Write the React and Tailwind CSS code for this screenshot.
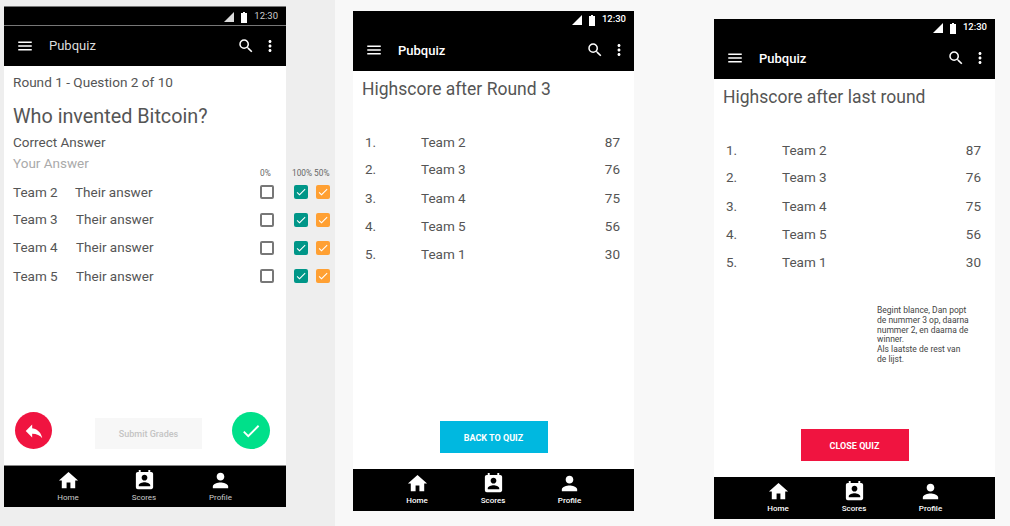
import React from 'react';
import { MdHome, MdPermContactCalendar, MdPerson, MdReply, MdMenu, MdSearch, MdMoreVert, MdCheck } from 'react-icons/md';

const answers = [
  { team: 'Team 2', row: 'h-[28px]', gap: 'w-[62px]' },
  { team: 'Team 3', row: 'h-[27px]', gap: 'w-[63px]' },
  { team: 'Team 4', row: 'h-[29px]', gap: 'w-[63px]' },
  { team: 'Team 5', row: 'h-[28px]', gap: 'w-[63px]' },
];

const scores = [
  { rank: '1.', team: 'Team 2', points: 87, row: 'h-[27px]' },
  { rank: '2.', team: 'Team 3', points: 76, row: 'h-[27px]' },
  { rank: '3.', team: 'Team 4', points: 75, row: 'h-[30px]' },
  { rank: '4.', team: 'Team 5', points: 56, row: 'h-[27px]' },
  { rank: '5.', team: 'Team 1', points: 30, row: 'h-[29px]' },
];

function TopBar({ bold, lined }) {
  return (
    <div className="bg-black text-white shrink-0">
      <div className={`flex items-center justify-end pr-[8px] ${lined ? 'border-b border-[#777] h-[19px]' : 'h-[18px] pb-[2px]'}`}>
        <svg width="10" height="10" viewBox="0 0 10 10" className="mr-[7px] mt-[2px]">
          <path d="M0 10h10V0z" fill={lined ? '#ddd' : '#fff'} />
        </svg>
        <svg width="6" height="11" viewBox="0 0 6 11" className="mr-[7px] mt-[2px]">
          <path d="M2 0h2v1h2v10H0V1h2z" fill="#fff" />
        </svg>
        <span className={`text-[9.5px] leading-none ${bold ? 'font-medium' : 'text-[#ccc]'}`}>12:30</span>
      </div>
      <div className={`flex items-center pl-[13px] ${lined ? 'h-[40px] pr-[7px]' : 'h-[42px] pr-[6px]'}`}>
        <MdMenu size={18} className="-ml-[1px]" />
        <span className={`ml-[15px] text-[13px] ${bold ? 'font-medium mt-[2px]' : 'text-[#ddd]'}`}>Pubquiz</span>
        <MdSearch size={18} className="ml-auto" />
        <MdMoreVert size={18} className="ml-[6px]" />
      </div>
    </div>
  );
}

function BottomNav({ bold, lined }) {
  const label = bold ? 'text-[8px] leading-none font-medium text-white mt-[2px]' : 'text-[8px] leading-none text-[#ccc] mt-[2px]';
  return (
    <div className={`flex items-start h-[42px] bg-black shrink-0 pl-[26px] pt-[3px] ${lined ? 'border-t border-[#888]' : ''}`}>
      <div className="flex flex-col items-center w-[76px] text-white">
        <MdHome size={23} />
        <span className={label}>Home</span>
      </div>
      <div className="flex flex-col items-center w-[76px] text-white">
        <MdPermContactCalendar size={23} />
        <span className={label}>Scores</span>
      </div>
      <div className="flex flex-col items-center w-[77px] text-white">
        <MdPerson size={23} />
        <span className={label}>Profile</span>
      </div>
    </div>
  );
}

function Box({ color }) {
  return (
    <span className={`flex items-center justify-center w-[14px] h-[14px] rounded-[2px] ${color}`}>
      <MdCheck size={12} color="#fff" />
    </span>
  );
}

function QuestionPhone() {
  return (
    <div className="flex flex-col w-[282px] h-[501px] bg-white border-t border-[#777] shrink-0">
      <TopBar lined />
      <div className="flex flex-col flex-1 text-[#555]">
        <div className="pl-[9px] pt-[6px] text-[13.6px] leading-[20px]">Round 1 - Question 2 of 10</div>
        <div className="pl-[9px] mt-[11px] text-[19.8px] leading-[28px]">Who invented Bitcoin?</div>
        <div className="pl-[9px] mt-[1px] text-[13.5px] leading-[20px]">Correct Answer</div>
        <div className="pl-[9px] mt-[1px] text-[13.5px] leading-[20px] text-[#aaa]">Your Answer</div>
        <div className="pl-[256px] h-[10px] -mt-[5px] text-[8.3px] leading-[10px] text-[#666]">0%</div>
        <div>
          {answers.map((a) => (
            <div key={a.team} className={`flex items-center pl-[9px] text-[13.5px] ${a.row}`}>
              <span className={a.gap}>{a.team}</span>
              <span>Their answer</span>
              <span className="ml-auto mr-[12px] w-[14px] h-[14px] rounded-[2px] border-2 border-[#777]" />
            </div>
          ))}
        </div>
        <div className="flex items-end mt-auto mb-[16px] pl-[11px]">
          <div className="flex items-center justify-center w-[37px] h-[37px] rounded-full bg-[#f01440] text-white">
            <MdReply size={22} />
          </div>
          <div className="flex items-center justify-center ml-[43px] pt-[2px] w-[107px] h-[31px] bg-[#f7f7f7] text-[#c4c4c4] text-[9px] font-medium">Submit Grades</div>
          <div className="flex items-center justify-center ml-[30px] w-[38px] h-[37px] rounded-full bg-[#00e08a] text-white">
            <MdCheck size={22} />
          </div>
        </div>
      </div>
      <BottomNav lined />
    </div>
  );
}

function GradeColumn() {
  return (
    <div className="flex flex-col ml-[6px] pt-[163px] text-[#666]">
      <div className="h-[8px] text-[8.3px] leading-[8px] whitespace-nowrap">100% 50%</div>
      <div className="mt-[1px]">
        {answers.map((a) => (
          <div key={a.team} className={`flex items-center gap-[8px] pl-[2px] ${a.row}`}>
            <Box color="bg-[#009688]" />
            <Box color="bg-[#ffa033]" />
          </div>
        ))}
      </div>
    </div>
  );
}

function ScorePhone({ title, button, buttonColor, offset, note }) {
  return (
    <div className={`flex flex-col w-[281px] h-[500px] bg-white shrink-0 ${offset}`}>
      <TopBar bold />
      <div className="flex flex-col flex-1 text-[#555]">
        <div className="pl-[9px] mt-[5px] text-[17.5px] leading-[26px]">{title}</div>
        <div className="mt-[27px]">
          {scores.map((s) => (
            <div key={s.rank} className={`flex items-center pl-[12px] pr-[14px] text-[13.5px] ${s.row}`}>
              <span className="w-[56px]">{s.rank}</span>
              <span>{s.team}</span>
              <span className="ml-auto">{s.points}</span>
            </div>
          ))}
        </div>
        {note && (
          <div className="ml-[163px] mt-[29px] w-[93px] text-[8.5px] leading-[9.8px] text-[#444]">
            Begint blance, Dan popt de nummer 3 op, daarna nummer 2, en daarna de winner.<br />Als laatste de rest van de lijst.
          </div>
        )}
        <div className={`flex items-center justify-center self-center mt-auto mb-[16px] pt-[3px] w-[108px] h-[32px] text-white text-[9px] font-bold ${buttonColor}`}>
          {button}
        </div>
      </div>
      <BottomNav bold />
    </div>
  );
}

export default function App() {
  return (
    <div className="flex w-[1010px] h-[526px] overflow-hidden" style={{ fontFamily: 'Roboto, sans-serif' }}>
      <div className="flex w-[335px] h-full pl-[4px] pt-[6px] bg-[#eeeeee] shrink-0">
        <QuestionPhone />
        <GradeColumn />
      </div>
      <div className="flex items-start flex-1 h-full pl-[18px] bg-[#f8f8f8]">
        <ScorePhone title="Highscore after Round 3" button="BACK TO QUIZ" buttonColor="bg-[#00b8e0]" offset="mt-[11px]" />
        <ScorePhone title="Highscore after last round" button="CLOSE QUIZ" buttonColor="bg-[#f01440]" offset="mt-[19px] ml-[80px]" note />
      </div>
    </div>
  );
}
